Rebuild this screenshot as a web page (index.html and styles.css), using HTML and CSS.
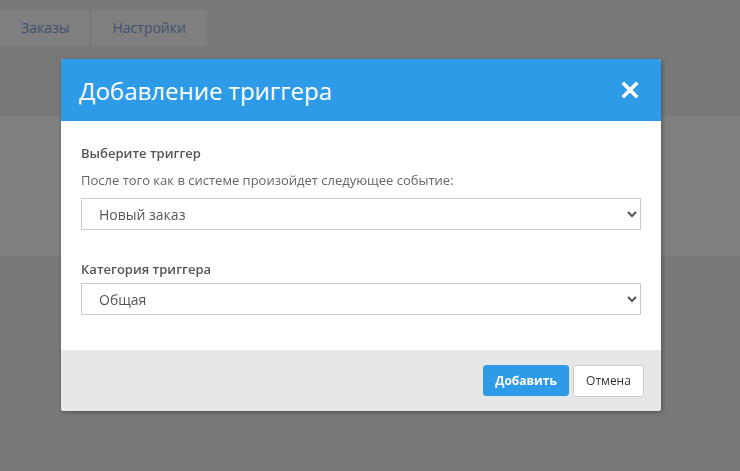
FILE: index.html
```html
<!DOCTYPE html>
<html lang="ru">
<head>
    <meta charset="UTF-8">
    <meta name="viewport" content="width=device-width, initial-scale=1.0">
    <title>Триггеры</title>
    <link rel="stylesheet" href="styles.css">
</head>
<body>
    <div class="page">
        <div class="tabs">
            <a class="tab" href="#">Заказы</a>
            <a class="tab" href="#">Настройки</a>
        </div>
        <div class="panel"></div>
    </div>

    <div class="backdrop">
        <div class="modal">
            <div class="modal-header">
                <h2>Добавление триггера</h2>
                <button class="close-btn" type="button" aria-label="Закрыть">
                    <svg width="18" height="18" viewBox="0 0 18 18">
                        <path d="M3 3 L15 15 M15 3 L3 15" stroke="#fff" stroke-width="3.6" stroke-linecap="square"/>
                    </svg>
                </button>
            </div>
            <div class="modal-body">
                <div class="field-title">Выберите триггер</div>
                <p class="hint">После того как в системе произойдет следующее событие:</p>
                <select class="select">
                    <option>Новый заказ</option>
                </select>

                <div class="field-title second">Категория триггера</div>
                <select class="select">
                    <option>Общая</option>
                </select>
            </div>
            <div class="modal-footer">
                <button class="btn btn-primary" type="button">Добавить</button>
                <button class="btn btn-default" type="button">Отмена</button>
            </div>
        </div>
    </div>
</body>
</html>
```
FILE: styles.css
```css
body {
  margin: 0;
  font-family: "Open Sans", "Liberation Sans", sans-serif;
  background-color: #f0f0f0;
}

.page {
  padding-top: 10px;
  height: 461px;
}

.tabs {
  display: flex;
}

.tab {
  display: block;
  height: 36px;
  line-height: 36px;
  padding: 0 21px;
  font-size: 14px;
  color: #7ca6e0;
  text-decoration: none;
  background-color: #ffffff;
  border-right: 1px solid #e4e4e4;
}

.tab + .tab {
  border-right: none;
}

.panel {
  margin-top: 70px;
  height: 140px;
  background-color: #ffffff;
}

.backdrop {
  position: fixed;
  top: 0;
  left: 0;
  right: 0;
  bottom: 0;
  background-color: rgba(0, 0, 0, 0.5);
}

.modal {
  position: absolute;
  top: 59px;
  left: 61px;
  width: 600px;
  background-color: #fff;
  border-radius: 3px;
  overflow: hidden;
  box-shadow: 1px 1px 4px rgba(0, 0, 0, 0.35);
}

.modal-header {
  height: 62px;
  background-color: #2e9be8;
  display: flex;
  align-items: center;
  justify-content: space-between;
  padding: 0 22px 0 18px;
}

.modal-header h2 {
  margin: 0;
  font-size: 24px;
  font-weight: 400;
  color: #fff;
}

.close-btn {
  border: none;
  background: none;
  padding: 0;
  width: 18px;
  height: 18px;
  cursor: pointer;
}

.close-btn svg {
  display: block;
}

.modal-body {
  padding: 23px 20px 35px;
}

.field-title {
  font-size: 13px;
  line-height: 18px;
  font-weight: 600;
  color: #555;
}

.field-title.second {
  margin-top: 30px;
  margin-bottom: 5px;
}

.hint {
  margin: 9px 0 9px;
  font-size: 13px;
  line-height: 18px;
  color: #666;
}

.select {
  display: block;
  width: 100%;
  height: 32px;
  padding: 0 12px 0 13px;
  font-family: inherit;
  font-size: 14px;
  color: #555;
  background-color: #fff;
  border: 1px solid #ccc;
  border-radius: 0;
}

.modal-footer {
  height: 61px;
  background-color: #e6e7e9;
  display: flex;
  align-items: center;
  justify-content: flex-end;
  padding-right: 17px;
}

.btn {
  height: 31px;
  font-family: inherit;
  font-size: 12px;
  border-radius: 3px;
  cursor: pointer;
}

.btn-primary {
  width: 86px;
  font-weight: 700;
  color: #fff;
  background-color: #2e9be8;
  border: 1px solid #2e9be8;
}

.btn-default {
  width: 71px;
  height: 32px;
  margin-left: 4px;
  color: #333;
  background-color: #fff;
  border: 1px solid #ccc;
}
```
